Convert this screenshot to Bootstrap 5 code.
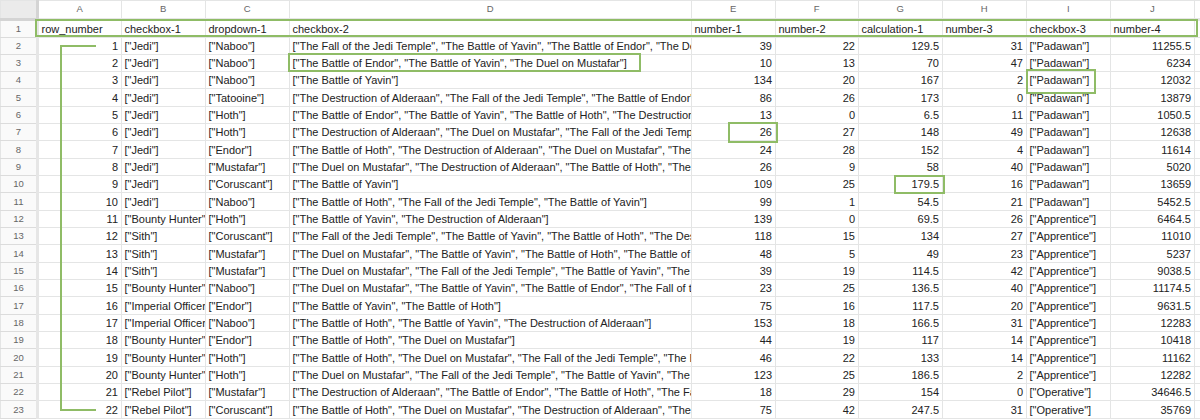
<!DOCTYPE html>
<html lang="en">
<head>
<meta charset="utf-8">
<title>Sheet</title>
<link href="https://cdn.jsdelivr.net/npm/bootstrap@5.3.0/dist/css/bootstrap.min.css" rel="stylesheet">
<style>
html, body { background: #fff; margin: 0; overflow: hidden; }
.sheet-wrap { width: 1200px; height: 420px; overflow: hidden; font-family: "Liberation Sans", Arial, sans-serif; }
.sheet.table { width: 1200px; table-layout: fixed; border-collapse: collapse; margin: 0; font-size: 11px; color: #222; }
.sheet.table > :not(caption) > * > * { padding: 0 3px 0 2.5px; height: 17.33px; line-height: 16px; border: 1px solid #e4e5e5; white-space: nowrap; overflow: hidden; text-overflow: clip; box-shadow: none; color: #222; background: #fff; vertical-align: middle; font-weight: 400; }
.sheet.table > thead > tr > * { height: 18.5px; font-size: 9.5px; color: #666; text-align: center; }
.sheet.table > * > tr > th.rowhead { font-size: 9.5px; color: #666; text-align: center; background: #fafafa; padding: 0; border-bottom-color: #dcdcdc; border-right: 3px solid #e6e6e6; }
.sheet.table > thead > tr > th.corner { background: #ebebeb; border-right: 3px solid #d4d4d4; border-bottom: 3px solid #d4d4d4; }
.sheet.table > thead > tr > th { border-bottom: 3px solid #e6e6e6; }
.mark-box { position: absolute; border: 2px solid #8fbc66; }
.mark-head { left: 35px; top: 19px; width: 1163px; height: 18px; }
.mark-d { left: 288px; top: 53px; width: 353px; height: 19px; }
.mark-i { left: 1026px; top: 69px; width: 70px; height: 25px; }
.mark-e { left: 728px; top: 122px; width: 50px; height: 21px; }
.mark-g { left: 894px; top: 175px; width: 51px; height: 19px; }
.mark-bracket { left: 60px; top: 45px; width: 36px; height: 366px; border-right: 0; }
</style>
</head>
<body>
<div class="sheet-wrap position-relative">
<table class="table table-bordered sheet">
<colgroup><col style="width:37px"><col style="width:84px"><col style="width:84px"><col style="width:84px"><col style="width:402px"><col style="width:84px"><col style="width:83px"><col style="width:84px"><col style="width:84px"><col style="width:84px"><col style="width:84px"><col style="width:6px"></colgroup>
<thead>
<tr><th class="corner"></th><th>A</th><th>B</th><th>C</th><th>D</th><th>E</th><th>F</th><th>G</th><th>H</th><th>I</th><th>J</th><th></th></tr>
</thead>
<tbody>
<tr><th class="rowhead">1</th><td>row_number</td><td>checkbox-1</td><td>dropdown-1</td><td>checkbox-2</td><td>number-1</td><td>number-2</td><td>calculation-1</td><td>number-3</td><td>checkbox-3</td><td>number-4</td><td></td></tr>
<tr><th class="rowhead">2</th><td class="text-end">1</td><td>["Jedi"]</td><td>["Naboo"]</td><td>["The Fall of the Jedi Temple", "The Battle of Yavin", "The Battle of Endor", "The Destruction of Alderaan"]</td><td class="text-end">39</td><td class="text-end">22</td><td class="text-end">129.5</td><td class="text-end">31</td><td>["Padawan"]</td><td class="text-end">11255.5</td><td></td></tr>
<tr><th class="rowhead">3</th><td class="text-end">2</td><td>["Jedi"]</td><td>["Naboo"]</td><td>["The Battle of Endor", "The Battle of Yavin", "The Duel on Mustafar"]</td><td class="text-end">10</td><td class="text-end">13</td><td class="text-end">70</td><td class="text-end">47</td><td>["Padawan"]</td><td class="text-end">6234</td><td></td></tr>
<tr><th class="rowhead">4</th><td class="text-end">3</td><td>["Jedi"]</td><td>["Naboo"]</td><td>["The Battle of Yavin"]</td><td class="text-end">134</td><td class="text-end">20</td><td class="text-end">167</td><td class="text-end">2</td><td>["Padawan"]</td><td class="text-end">12032</td><td></td></tr>
<tr><th class="rowhead">5</th><td class="text-end">4</td><td>["Jedi"]</td><td>["Tatooine"]</td><td>["The Destruction of Alderaan", "The Fall of the Jedi Temple", "The Battle of Endor", "The Battle of Hoth"]</td><td class="text-end">86</td><td class="text-end">26</td><td class="text-end">173</td><td class="text-end">0</td><td>["Padawan"]</td><td class="text-end">13879</td><td></td></tr>
<tr><th class="rowhead">6</th><td class="text-end">5</td><td>["Jedi"]</td><td>["Hoth"]</td><td>["The Battle of Endor", "The Battle of Yavin", "The Battle of Hoth", "The Destruction of Alderaan"]</td><td class="text-end">13</td><td class="text-end">0</td><td class="text-end">6.5</td><td class="text-end">11</td><td>["Padawan"]</td><td class="text-end">1050.5</td><td></td></tr>
<tr><th class="rowhead">7</th><td class="text-end">6</td><td>["Jedi"]</td><td>["Hoth"]</td><td>["The Destruction of Alderaan", "The Duel on Mustafar", "The Fall of the Jedi Temple", "The Battle of Hoth"]</td><td class="text-end">26</td><td class="text-end">27</td><td class="text-end">148</td><td class="text-end">49</td><td>["Padawan"]</td><td class="text-end">12638</td><td></td></tr>
<tr><th class="rowhead">8</th><td class="text-end">7</td><td>["Jedi"]</td><td>["Endor"]</td><td>["The Battle of Hoth", "The Destruction of Alderaan", "The Duel on Mustafar", "The Battle of Yavin"]</td><td class="text-end">24</td><td class="text-end">28</td><td class="text-end">152</td><td class="text-end">4</td><td>["Padawan"]</td><td class="text-end">11614</td><td></td></tr>
<tr><th class="rowhead">9</th><td class="text-end">8</td><td>["Jedi"]</td><td>["Mustafar"]</td><td>["The Duel on Mustafar", "The Destruction of Alderaan", "The Battle of Hoth", "The Battle of Yavin"]</td><td class="text-end">26</td><td class="text-end">9</td><td class="text-end">58</td><td class="text-end">40</td><td>["Padawan"]</td><td class="text-end">5020</td><td></td></tr>
<tr><th class="rowhead">10</th><td class="text-end">9</td><td>["Jedi"]</td><td>["Coruscant"]</td><td>["The Battle of Yavin"]</td><td class="text-end">109</td><td class="text-end">25</td><td class="text-end">179.5</td><td class="text-end">16</td><td>["Padawan"]</td><td class="text-end">13659</td><td></td></tr>
<tr><th class="rowhead">11</th><td class="text-end">10</td><td>["Jedi"]</td><td>["Naboo"]</td><td>["The Battle of Hoth", "The Fall of the Jedi Temple", "The Battle of Yavin"]</td><td class="text-end">99</td><td class="text-end">1</td><td class="text-end">54.5</td><td class="text-end">21</td><td>["Padawan"]</td><td class="text-end">5452.5</td><td></td></tr>
<tr><th class="rowhead">12</th><td class="text-end">11</td><td>["Bounty Hunter"]</td><td>["Hoth"]</td><td>["The Battle of Yavin", "The Destruction of Alderaan"]</td><td class="text-end">139</td><td class="text-end">0</td><td class="text-end">69.5</td><td class="text-end">26</td><td>["Apprentice"]</td><td class="text-end">6464.5</td><td></td></tr>
<tr><th class="rowhead">13</th><td class="text-end">12</td><td>["Sith"]</td><td>["Coruscant"]</td><td>["The Fall of the Jedi Temple", "The Battle of Yavin", "The Battle of Hoth", "The Destruction of Alderaan"]</td><td class="text-end">118</td><td class="text-end">15</td><td class="text-end">134</td><td class="text-end">27</td><td>["Apprentice"]</td><td class="text-end">11010</td><td></td></tr>
<tr><th class="rowhead">14</th><td class="text-end">13</td><td>["Sith"]</td><td>["Mustafar"]</td><td>["The Duel on Mustafar", "The Battle of Yavin", "The Battle of Hoth", "The Battle of Endor"]</td><td class="text-end">48</td><td class="text-end">5</td><td class="text-end">49</td><td class="text-end">23</td><td>["Apprentice"]</td><td class="text-end">5237</td><td></td></tr>
<tr><th class="rowhead">15</th><td class="text-end">14</td><td>["Sith"]</td><td>["Mustafar"]</td><td>["The Duel on Mustafar", "The Fall of the Jedi Temple", "The Battle of Yavin", "The Battle of Hoth"]</td><td class="text-end">39</td><td class="text-end">19</td><td class="text-end">114.5</td><td class="text-end">42</td><td>["Apprentice"]</td><td class="text-end">9038.5</td><td></td></tr>
<tr><th class="rowhead">16</th><td class="text-end">15</td><td>["Bounty Hunter"]</td><td>["Naboo"]</td><td>["The Duel on Mustafar", "The Battle of Yavin", "The Battle of Endor", "The Fall of the Jedi Temple"]</td><td class="text-end">23</td><td class="text-end">25</td><td class="text-end">136.5</td><td class="text-end">40</td><td>["Apprentice"]</td><td class="text-end">11174.5</td><td></td></tr>
<tr><th class="rowhead">17</th><td class="text-end">16</td><td>["Imperial Officer"]</td><td>["Endor"]</td><td>["The Battle of Yavin", "The Battle of Hoth"]</td><td class="text-end">75</td><td class="text-end">16</td><td class="text-end">117.5</td><td class="text-end">20</td><td>["Apprentice"]</td><td class="text-end">9631.5</td><td></td></tr>
<tr><th class="rowhead">18</th><td class="text-end">17</td><td>["Imperial Officer"]</td><td>["Naboo"]</td><td>["The Battle of Hoth", "The Battle of Yavin", "The Destruction of Alderaan"]</td><td class="text-end">153</td><td class="text-end">18</td><td class="text-end">166.5</td><td class="text-end">31</td><td>["Apprentice"]</td><td class="text-end">12283</td><td></td></tr>
<tr><th class="rowhead">19</th><td class="text-end">18</td><td>["Bounty Hunter"]</td><td>["Endor"]</td><td>["The Battle of Hoth", "The Duel on Mustafar"]</td><td class="text-end">44</td><td class="text-end">19</td><td class="text-end">117</td><td class="text-end">14</td><td>["Apprentice"]</td><td class="text-end">10418</td><td></td></tr>
<tr><th class="rowhead">20</th><td class="text-end">19</td><td>["Bounty Hunter"]</td><td>["Hoth"]</td><td>["The Battle of Hoth", "The Duel on Mustafar", "The Fall of the Jedi Temple", "The Battle of Yavin"]</td><td class="text-end">46</td><td class="text-end">22</td><td class="text-end">133</td><td class="text-end">14</td><td>["Apprentice"]</td><td class="text-end">11162</td><td></td></tr>
<tr><th class="rowhead">21</th><td class="text-end">20</td><td>["Bounty Hunter"]</td><td>["Hoth"]</td><td>["The Duel on Mustafar", "The Fall of the Jedi Temple", "The Battle of Yavin", "The Battle of Hoth"]</td><td class="text-end">123</td><td class="text-end">25</td><td class="text-end">186.5</td><td class="text-end">2</td><td>["Apprentice"]</td><td class="text-end">12282</td><td></td></tr>
<tr><th class="rowhead">22</th><td class="text-end">21</td><td>["Rebel Pilot"]</td><td>["Mustafar"]</td><td>["The Destruction of Alderaan", "The Battle of Endor", "The Battle of Hoth", "The Fall of the Jedi Temple"]</td><td class="text-end">18</td><td class="text-end">29</td><td class="text-end">154</td><td class="text-end">0</td><td>["Operative"]</td><td class="text-end">34646.5</td><td></td></tr>
<tr><th class="rowhead">23</th><td class="text-end">22</td><td>["Rebel Pilot"]</td><td>["Coruscant"]</td><td>["The Battle of Hoth", "The Duel on Mustafar", "The Destruction of Alderaan", "The Battle of Yavin"]</td><td class="text-end">75</td><td class="text-end">42</td><td class="text-end">247.5</td><td class="text-end">31</td><td>["Operative"]</td><td class="text-end">35769</td><td></td></tr>
</tbody>
</table>
<div class="mark-box mark-head"></div>
<div class="mark-box mark-d"></div>
<div class="mark-box mark-i"></div>
<div class="mark-box mark-e"></div>
<div class="mark-box mark-g"></div>
<div class="mark-box mark-bracket"></div>
</div>
<script src="https://cdn.jsdelivr.net/npm/bootstrap@5.3.0/dist/js/bootstrap.bundle.min.js"></script>
</body>
</html>
